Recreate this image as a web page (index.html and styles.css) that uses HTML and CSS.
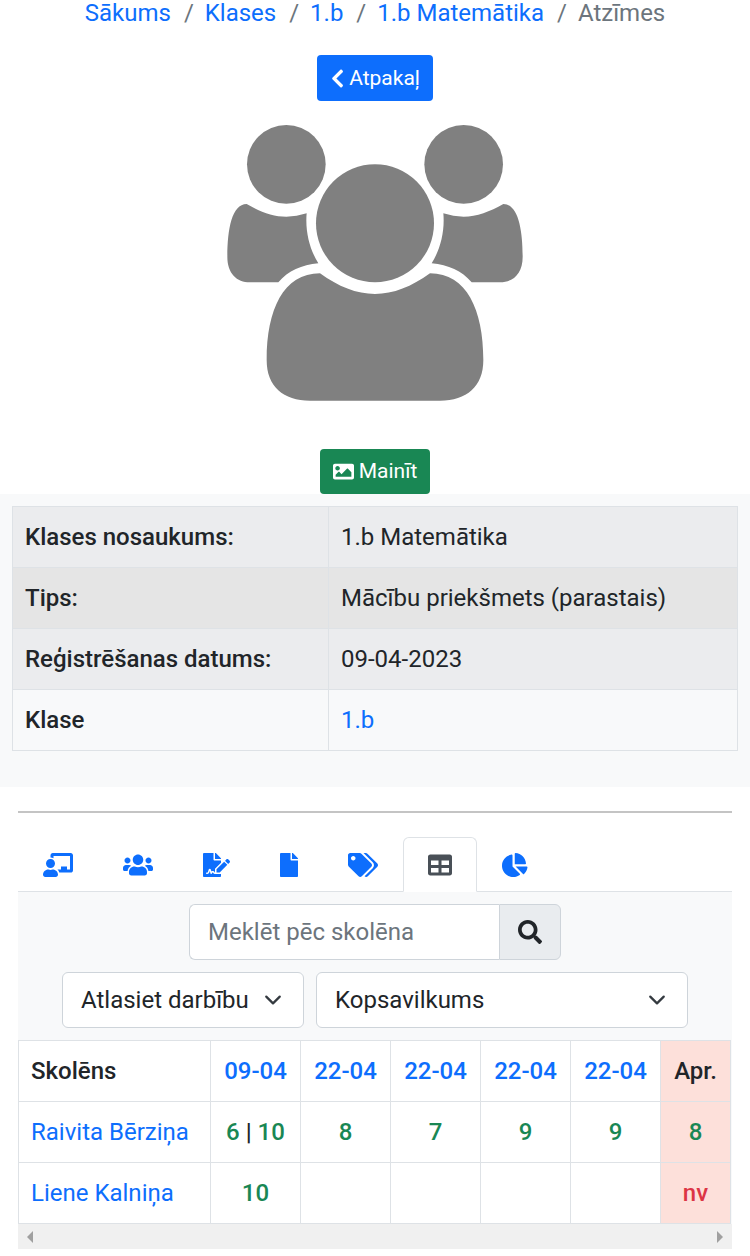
FILE: index.html
```html
<!DOCTYPE html>
<html lang="lv">
<head>
  <meta charset="UTF-8" />
  <meta name="viewport" content="width=device-width, initial-scale=1" />
  <title>Atzīmes</title>
  <link rel="stylesheet" href="styles.css">
</head>
<body>
  <!-- Breadcrumb -->
  <nav class="breadcrumb">
    <a href="#">Sākums</a><span class="sep">/</span>
    <a href="#">Klases</a><span class="sep">/</span>
    <a href="#">1.b</a><span class="sep">/</span>
    <a href="#">1.b Matemātika</a><span class="sep">/</span>
    <span class="current">Atzīmes</span>
  </nav>

  <div class="center">
    <a href="#" class="btn btn-primary">
      <svg class="icon" viewBox="0 0 320 512"><path d="M34.52 239.03L228.87 44.69c9.37-9.37 24.57-9.37 33.94 0l22.67 22.67c9.36 9.36 9.37 24.52.04 33.9L131.49 256l154.02 154.75c9.34 9.38 9.32 24.54-.04 33.9l-22.67 22.67c-9.37 9.37-24.57 9.37-33.94 0L34.52 272.97c-9.37-9.37-9.37-24.57 0-33.94z"/></svg>
      Atpakaļ
    </a>
  </div>

  <div class="center">
    <svg class="avatar" viewBox="0 0 990 900">
      <circle cx="229" cy="163" r="118"/>
      <circle cx="761" cy="163" r="118"/>
      <circle cx="495" cy="340" r="177"/>
      <path d="M110 282C150 305 190 320 229 320C250 320 270 316 290 310C285 365 300 420 325 460C275 465 235 482 205 517L120 517C80 517 52 490 52 440C52 360 65 282 110 282Z"/>
      <path d="M880 282C840 305 800 320 761 320C740 320 720 316 700 310C705 365 690 420 665 460C715 465 755 482 785 517L870 517C910 517 938 490 938 440C938 360 925 282 880 282Z"/>
      <path d="M330 490C385 530 440 552 495 552C550 552 605 530 660 490C770 490 820 600 820 750C820 830 770 872 690 872L300 872C220 872 170 830 170 750C170 600 220 490 330 490Z"/>
    </svg>
  </div>

  <div class="center">
    <a href="#" class="btn btn-success">
      <svg class="icon" viewBox="0 0 512 512"><path d="M464 448H48c-26.51 0-48-21.49-48-48V112c0-26.51 21.49-48 48-48h416c26.51 0 48 21.49 48 48v288c0 26.51-21.49 48-48 48zM112 120c-30.928 0-56 25.072-56 56s25.072 56 56 56 56-25.072 56-56-25.072-56-56-56zM64 384h384V272l-87.515-87.515c-4.686-4.686-12.284-4.686-16.971 0L208 320l-55.515-55.515c-4.686-4.686-12.284-4.686-16.971 0L64 336v48z"/></svg>
      Mainīt
    </a>
  </div>

  <!-- Class info -->
  <section class="info">
    <table class="info-table">
      <tr class="row-a">
        <th>Klases nosaukums:</th>
        <td>1.b Matemātika</td>
      </tr>
      <tr class="row-b">
        <th>Tips:</th>
        <td>Mācību priekšmets (parastais)</td>
      </tr>
      <tr class="row-a">
        <th>Reģistrēšanas datums:</th>
        <td>09-04-2023</td>
      </tr>
      <tr class="row-c">
        <th>Klase</th>
        <td><a href="#">1.b</a></td>
      </tr>
    </table>
  </section>

  <div class="content">
    <hr class="divider" />

    <!-- Tabs -->
    <ul class="tabs">
      <li class="tab"><svg viewBox="0 0 640 512"><path d="M208 352c-2.39 0-4.78.35-7.06 1.09C187.98 357.3 174.35 360 160 360c-14.35 0-27.98-2.7-40.95-6.91-2.28-.74-4.66-1.09-7.05-1.09C49.94 352-.33 402.48 0 464.62.14 490.88 21.73 512 48 512h224c26.27 0 47.86-21.12 48-47.38.33-62.14-49.94-112.62-112-112.62zm-48-32c53.02 0 96-42.98 96-96s-42.98-96-96-96-96 42.98-96 96 42.98 96 96 96zM592 0H208c-26.47 0-48 22.25-48 49.59V96c23.42 0 45.1 6.78 64 17.8V64h352v288h-64v-64H384v64h-76.24c19.1 16.69 33.12 38.73 39.69 64H592c26.47 0 48-22.25 48-49.59V49.59C640 22.25 618.47 0 592 0z"/></svg></li>
      <li class="tab"><svg viewBox="0 0 640 512"><path d="M96 224c35.3 0 64-28.7 64-64s-28.7-64-64-64-64 28.7-64 64 28.7 64 64 64zm448 0c35.3 0 64-28.7 64-64s-28.7-64-64-64-64 28.7-64 64 28.7 64 64 64zm32 32h-64c-17.6 0-33.5 7.1-45.1 18.6 40.3 22.1 68.9 62 75.1 109.4h66c17.7 0 32-14.3 32-32v-32c0-35.3-28.7-64-64-64zm-256 0c61.9 0 112-50.1 112-112S381.9 32 320 32 208 82.1 208 144s50.1 112 112 112zm76.8 32h-8.3c-20.8 10-43.9 16-68.5 16s-47.6-6-68.5-16h-8.3C179.6 288 128 339.6 128 403.2V432c0 26.5 21.5 48 48 48h288c26.5 0 48-21.5 48-48v-28.8c0-63.6-51.6-115.2-115.2-115.2zm-223.7-13.4C161.5 263.1 145.6 256 128 256H64c-35.3 0-64 28.7-64 64v32c0 17.7 14.3 32 32 32h65.9c6.3-47.4 34.9-87.3 75.2-109.4z"/></svg></li>
      <li class="tab"><svg viewBox="0 0 576 512"><path d="M218.17 424.14c-2.95-5.92-8.09-6.52-10.17-6.52s-7.22.59-10.02 6.19l-7.67 15.34c-6.37 12.78-25.03 11.37-29.48-2.09L144 386.59l-10.61 31.88c-5.89 17.66-22.38 29.53-41 29.53H80c-8.84 0-16-7.16-16-16s7.16-16 16-16h12.39c4.83 0 9.11-3.08 10.64-7.66l18.19-54.64c3.3-9.81 12.44-16.41 22.78-16.41s19.48 6.59 22.77 16.41l13.88 41.64c19.75-16.19 54.06-9.7 66 14.16 1.89 3.78 5.49 5.95 9.36 6.26v-82.12l128-127.09V160H248c-13.2 0-24-10.8-24-24V0H24C10.7 0 0 10.7 0 24v464c0 13.3 10.7 24 24 24h336c13.3 0 24-10.7 24-24v-40l-128-.11c-16.12-.31-30.58-9.28-37.83-23.75zM384 121.9c0-6.3-2.5-12.4-7-16.9L279.1 7c-4.5-4.5-10.6-7-17-7H256v128h128v-6.1zm-96 225.06V416h68.99l161.68-162.78-67.88-67.88L288 346.96zm280.54-179.63l-31.87-31.87c-9.94-9.94-26.07-9.94-36.01 0l-27.25 27.25-4.79 4.79 67.88 67.88 32.04-32.04c9.95-9.94 9.95-26.07 0-36.01z"/></svg></li>
      <li class="tab"><svg viewBox="0 0 384 512"><path d="M224 136V0H24C10.7 0 0 10.7 0 24v464c0 13.3 10.7 24 24 24h336c13.3 0 24-10.7 24-24V160H248c-13.2 0-24-10.8-24-24zm160-14.1v6.1H256V0h6.1c6.4 0 12.5 2.5 17 7l97.9 98c4.5 4.5 7 10.6 7 16.9z"/></svg></li>
      <li class="tab"><svg viewBox="0 0 640 512"><path d="M497.941 225.941L286.059 14.059A48 48 0 0 0 252.118 0H48C21.49 0 0 21.49 0 48v204.118a48 48 0 0 0 14.059 33.941l211.882 211.882c18.744 18.745 49.136 18.746 67.882 0l204.118-204.118c18.745-18.745 18.745-49.137 0-67.882zM112 160c-26.51 0-48-21.49-48-48s21.49-48 48-48 48 21.49 48 48-21.49 48-48 48zm513.941 133.823L421.823 497.941c-18.745 18.745-49.137 18.745-67.882 0l-.36-.36L527.64 323.522c16.999-16.999 26.36-39.6 26.36-63.64s-9.362-46.641-26.36-63.64L331.397 0h48.721a48 48 0 0 1 33.941 14.059l211.882 211.882c18.745 18.745 18.745 49.137 0 67.882z"/></svg></li>
      <li class="tab tab-active"><svg viewBox="0 0 512 512"><path d="M464 32H48C21.49 32 0 53.49 0 80v352c0 26.51 21.49 48 48 48h416c26.51 0 48-21.49 48-48V80c0-26.51-21.49-48-48-48zM224 416H64v-96h160v96zm0-160H64v-96h160v96zm224 160H288v-96h160v96zm0-160H288v-96h160v96z"/></svg></li>
      <li class="tab"><svg viewBox="0 0 544 512"><path d="M527.79 288H290.5l158.03 158.03c6.04 6.04 15.98 6.53 22.19.68 38.7-36.46 65.32-85.61 73.13-140.86 1.34-9.46-6.51-17.85-16.06-17.85zm-15.83-64.8C503.72 103.74 408.26 8.28 288.8.04 279.68-.59 272 7.1 272 16.24V240h223.77c9.14 0 16.82-7.68 16.19-16.8zM224 288V50.71c0-9.55-8.39-17.4-17.84-16.06C86.99 51.49-4.1 155.6.14 280.37 4.5 408.51 114.83 513.59 243.03 511.98c50.4-.63 96.97-16.87 135.26-44.03 7.9-5.6 8.42-17.23 1.57-24.08L224 288z"/></svg></li>
    </ul>

    <div class="panel">
      <form class="search">
        <input type="text" class="search-input" placeholder="Meklēt pēc skolēna" />
        <button type="button" class="search-btn">
          <svg viewBox="0 0 512 512"><path d="M505 442.7L405.3 343c-4.5-4.5-10.6-7-17-7H372c27.6-35.3 44-79.7 44-128C416 93.1 322.9 0 208 0S0 93.1 0 208s93.1 208 208 208c48.3 0 92.7-16.4 128-44v16.3c0 6.4 2.5 12.5 7 17l99.7 99.7c9.4 9.4 24.6 9.4 33.9 0l28.3-28.3c9.4-9.4 9.4-24.6.1-34zM208 336c-70.7 0-128-57.2-128-128 0-70.7 57.2-128 128-128 70.7 0 128 57.2 128 128 0 70.7-57.2 128-128 128z"/></svg>
        </button>
      </form>

      <div class="filters">
        <select class="select select-action">
          <option>Atlasiet darbību</option>
        </select>
        <select class="select select-view">
          <option>Kopsavilkums</option>
        </select>
      </div>

      <!-- Grades -->
      <table class="grades">
        <thead>
          <tr>
            <th class="col-name">Skolēns</th>
            <th class="col-date"><a href="#">09-04</a></th>
            <th class="col-date"><a href="#">22-04</a></th>
            <th class="col-date"><a href="#">22-04</a></th>
            <th class="col-date"><a href="#">22-04</a></th>
            <th class="col-date"><a href="#">22-04</a></th>
            <th class="col-month">Apr.</th>
          </tr>
        </thead>
        <tbody>
          <tr>
            <td class="student"><a href="#">Raivita Bērziņa</a></td>
            <td class="grade">6 <span class="pipe">|</span> 10</td>
            <td class="grade">8</td>
            <td class="grade">7</td>
            <td class="grade">9</td>
            <td class="grade">9</td>
            <td class="grade month">8</td>
          </tr>
          <tr>
            <td class="student"><a href="#">Liene Kalniņa</a></td>
            <td class="grade">10</td>
            <td class="grade"></td>
            <td class="grade"></td>
            <td class="grade"></td>
            <td class="grade"></td>
            <td class="grade month absent">nv</td>
          </tr>
        </tbody>
      </table>

      <div class="scrollbar">
        <span class="arrow arrow-left"></span>
        <span class="arrow arrow-right"></span>
      </div>
    </div>
  </div>
</body>
</html>
```

FILE: styles.css
```css
* {
  box-sizing: border-box;
}

body {
  margin: 0;
  font-family: Roboto, "Liberation Sans", sans-serif;
  font-size: 24px;
  line-height: 36px;
  color: #212529;
  background: #fff;
}

a {
  color: #0d6efd;
  text-decoration: none;
}

.breadcrumb {
  margin-top: -5px;
  margin-bottom: 24px;
  text-align: center;
}

.sep {
  margin: 0 5px 0 13px;
  color: #6c757d;
}

.current {
  color: #6c757d;
}

.center {
  display: flex;
  justify-content: center;
}

.btn {
  display: flex;
  align-items: center;
  padding: 6px 13px;
  border-radius: 4px;
  font-size: 21px;
  line-height: 33px;
  color: #fff;
}

.btn-primary {
  gap: 5px;
  padding: 6px 13px 6px 14px;
  line-height: 34px;
  background: #0d6efd;
}

.btn-success {
  gap: 5px;
  background: #198754;
}

.icon {
  height: 21px;
  fill: #fff;
}

.avatar {
  width: 330px;
  height: 300px;
  margin: 9px 0 39px;
  fill: #808080;
}

.info {
  padding: 12px 12px 36px;
  background: #f8f9fa;
}

.info-table {
  width: 100%;
  border-collapse: collapse;
}

.info-table th,
.info-table td {
  padding: 12px;
  border: 1px solid #dee2e6;
  text-align: left;
}

.info-table th {
  width: 316px;
  font-weight: 500;
}

.info-table td {
  font-weight: 400;
}

.row-a {
  background: #ebecee;
}

.row-b {
  background: #e5e5e5;
}

.row-c {
  background: #f8f9fa;
}

.content {
  padding: 0 18px;
}

.divider {
  height: 2px;
  margin: 24px 0 24px;
  border: 0;
  background: #c4c4c4;
}

.tabs {
  display: flex;
  margin: 0;
  padding: 0;
  list-style: none;
  border-bottom: 1px solid #dee2e6;
}

.tab {
  display: flex;
  align-items: center;
  height: 55px;
  margin-bottom: -1px;
  padding: 0 25px;
  fill: #0d6efd;
}

.tab svg {
  height: 24px;
}

.tab-active {
  padding: 0 24px;
  border: 1px solid #dee2e6;
  border-bottom-color: #fff;
  border-radius: 6px 6px 0 0;
  background: #fff;
  fill: #495057;
}

.panel {
  padding-top: 12px;
  background: #f8f9fa;
}

.search {
  display: flex;
  width: 372px;
  margin: 0 auto 12px;
}

.search-input {
  flex: 1;
  min-width: 0;
  height: 56px;
  padding: 9px 18px;
  border: 1px solid #ced4da;
  border-right: 0;
  border-radius: 6px 0 0 6px;
  background: #fff;
  font: inherit;
  color: #212529;
}

.search-input::placeholder {
  color: #6c757d;
  opacity: 1;
}

.search-btn {
  display: flex;
  align-items: center;
  justify-content: center;
  width: 62px;
  height: 56px;
  padding: 0;
  border: 1px solid #ced4da;
  border-radius: 0 6px 6px 0;
  background: #e9ecef;
}

.search-btn svg {
  width: 24px;
  fill: #212529;
}

.filters {
  display: flex;
  justify-content: center;
  gap: 12px;
  margin-bottom: 12px;
}

.select {
  height: 56px;
  padding: 9px 54px 9px 18px;
  border: 1px solid #ced4da;
  border-radius: 6px;
  appearance: none;
  background: #fff url("data:image/svg+xml,%3csvg xmlns='http://www.w3.org/2000/svg' viewBox='0 0 16 16'%3e%3cpath fill='none' stroke='%23343a40' stroke-linecap='round' stroke-linejoin='round' stroke-width='2' d='M2 5l6 6 6-6'/%3e%3c/svg%3e") no-repeat right 21px center / 18px 18px;
  font: inherit;
  color: #212529;
}

.select-action {
  width: 242px;
}

.select-view {
  width: 372px;
}

.grades {
  width: calc(100% - 1px);
  table-layout: fixed;
  border-collapse: collapse;
  background: #fff;
}

.grades th,
.grades td {
  height: 61px;
  padding: 12px;
  border: 1px solid #dee2e6;
  text-align: center;
  font-weight: 500;
}

.grades .col-name {
  width: 192px;
  text-align: left;
  color: #212529;
}

.col-date {
  width: 90px;
}

.grades .col-month {
  background: #fde0da;
}

.grades .student {
  text-align: left;
  font-weight: 400;
}

.grade {
  color: #198754;
}

.pipe {
  color: #212529;
}

.grades .month {
  background: #fde0da;
}

.grades .absent {
  color: #dc3545;
}

.scrollbar {
  display: flex;
  align-items: center;
  justify-content: space-between;
  height: 25px;
  padding: 0 9px;
  background: #f0f0f0;
}

.arrow {
  width: 0;
  height: 0;
  border-top: 6px solid transparent;
  border-bottom: 6px solid transparent;
}

.arrow-left {
  border-right: 6px solid #a0a0a0;
}

.arrow-right {
  border-left: 6px solid #a0a0a0;
}
```
